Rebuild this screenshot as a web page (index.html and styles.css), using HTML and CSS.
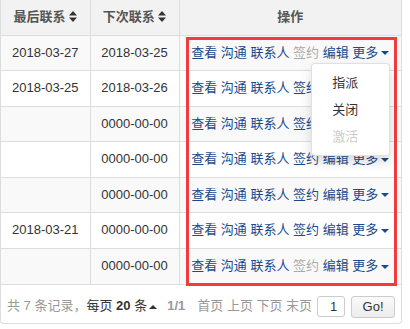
FILE: index.html
```html
<!DOCTYPE html>
<html lang="zh-CN">
<head>
    <meta charset="UTF-8">
    <title>客户列表</title>
    <link rel="stylesheet" href="styles.css">
</head>
<body>

<div class="panel">
    <table class="grid">
        <colgroup>
            <col class="col-date">
            <col class="col-date">
            <col>
        </colgroup>
        <thead>
            <tr>
                <th>最后联系 <svg class="sort" width="8" height="11" viewBox="0 0 8 11"><path d="M4 0L8 4.5H0z M4 11L8 6.5H0z" fill="#333"/></svg></th>
                <th>下次联系 <svg class="sort" width="8" height="11" viewBox="0 0 8 11"><path d="M4 0L8 4.5H0z M4 11L8 6.5H0z" fill="#333"/></svg></th>
                <th>操作</th>
            </tr>
        </thead>
        <tbody>
            <tr>
                <td>2018-03-27</td>
                <td>2018-03-25</td>
                <td class="ops">
                    <a>查看</a> <a>沟通</a> <a>联系人</a> <span class="off">签约</span> <a>编辑</a>
                    <span class="more">
                        <a>更多<i class="caret"></i></a>
                        <ul class="menu">
                            <li>指派</li>
                            <li>关闭</li>
                            <li class="disabled">激活</li>
                        </ul>
                    </span>
                </td>
            </tr>
            <tr>
                <td>2018-03-25</td>
                <td>2018-03-26</td>
                <td class="ops"><a>查看</a> <a>沟通</a> <a>联系人</a> <a>签约</a> <a>编辑</a> <a>更多<i class="caret"></i></a></td>
            </tr>
            <tr>
                <td></td>
                <td>0000-00-00</td>
                <td class="ops"><a>查看</a> <a>沟通</a> <a>联系人</a> <a>签约</a> <a>编辑</a> <a>更多<i class="caret"></i></a></td>
            </tr>
            <tr>
                <td></td>
                <td>0000-00-00</td>
                <td class="ops"><a>查看</a> <a>沟通</a> <a>联系人</a> <a>签约</a> <a>编辑</a> <a>更多<i class="caret"></i></a></td>
            </tr>
            <tr>
                <td></td>
                <td>0000-00-00</td>
                <td class="ops"><a>查看</a> <a>沟通</a> <a>联系人</a> <a>签约</a> <a>编辑</a> <a>更多<i class="caret"></i></a></td>
            </tr>
            <tr>
                <td>2018-03-21</td>
                <td>0000-00-00</td>
                <td class="ops"><a>查看</a> <a>沟通</a> <a>联系人</a> <a>签约</a> <a>编辑</a> <a>更多<i class="caret"></i></a></td>
            </tr>
            <tr>
                <td></td>
                <td>0000-00-00</td>
                <td class="ops"><a>查看</a> <a>沟通</a> <a>联系人</a> <span class="off">签约</span> <a>编辑</a> <a>更多<i class="caret"></i></a></td>
            </tr>
        </tbody>
    </table>

    <div class="pager">
        <span class="total">共 7 条记录，</span>
        <span class="per-page">每页 <b>20</b> 条</span><i class="caret-up"></i>
        <span class="pages">1/1</span>
        <span class="nav">首页 上页 下页 末页</span>
        <input class="page-input" type="text" value="1">
        <button class="go">Go!</button>
    </div>
</div>

<!-- annotation box around the actions column -->
<div class="mark"></div>

</body>
</html>
```

FILE: styles.css
```css
body {
    margin: 0;
    font-family: "Liberation Sans", "Noto Sans CJK SC", sans-serif;
    font-size: 13px;
    line-height: 1.42857;
    color: #333;
    background: #fff;
}

.panel {
    width: 402px;
    box-sizing: border-box;
    border: 1px solid #ddd;
    border-top: none;
    border-radius: 0 0 4px 4px;
}

.grid {
    width: 100%;
    border-collapse: collapse;
    table-layout: fixed;
}

.col-date {
    width: 89px;
}

.grid th,
.grid td {
    padding: 8px 0;
    text-align: center;
    border-bottom: 1px solid #ddd;
    white-space: nowrap;
}

.grid th + th,
.grid td + td {
    border-left: 1px solid #ddd;
}

.grid th {
    background-color: #f2f2f2;
    color: #555;
    font-weight: bold;
}

.grid tbody tr:nth-child(odd) td {
    background-color: #f9f9f9;
}

.sort {
    vertical-align: -1px;
}

.ops a {
    color: #1a4a8e;
    cursor: pointer;
}

.ops .off {
    color: #aaa;
}

.caret {
    display: inline-block;
    width: 0;
    height: 0;
    margin-left: 3px;
    vertical-align: middle;
    border-top: 4px solid #1a4a8e;
    border-left: 4px solid transparent;
    border-right: 4px solid transparent;
}

.more {
    position: relative;
}

.menu {
    position: absolute;
    top: 100%;
    right: -1px;
    margin: 3px 0 0;
    padding: 5px 0;
    width: 79px;
    box-sizing: border-box;
    list-style: none;
    text-align: left;
    background-color: #fff;
    border: 1px solid rgba(0, 0, 0, 0.12);
    border-radius: 4px;
    box-shadow: 0 6px 12px rgba(0, 0, 0, 0.15);
    z-index: 10;
}

.menu li {
    padding: 3px 20px;
    line-height: 21px;
    color: #333;
}

.menu li.disabled {
    color: #ccc;
}

.pager {
    display: flex;
    align-items: center;
    padding: 11px 6px 5px 6px;
    color: #999;
    white-space: pre;
}

.per-page {
    color: #333;
}

.caret-up {
    display: inline-block;
    width: 0;
    height: 0;
    margin-left: 2px;
    border-bottom: 4px solid #333;
    border-left: 4px solid transparent;
    border-right: 4px solid transparent;
}

.pages {
    margin-left: 10px;
    font-weight: bold;
}

.nav {
    margin-left: 12px;
}

.page-input {
    margin-left: 5px;
    width: 28px;
    height: 21px;
    box-sizing: border-box;
    padding: 0 0 0 12px;
    border: 1px solid #ccc;
    border-radius: 3px;
    font-family: inherit;
    font-size: 13px;
    color: #333;
}

.go {
    margin-left: 6px;
    width: 44px;
    height: 22px;
    padding: 0;
    border: 1px solid #ccc;
    border-radius: 3px;
    background: linear-gradient(#fafafa, #ececec);
    font-family: inherit;
    font-size: 13px;
    color: #333;
}

.mark {
    position: absolute;
    left: 186px;
    top: 37px;
    width: 211px;
    height: 249px;
    box-sizing: border-box;
    border: 3px solid #f23c3c;
    pointer-events: none;
}
```
